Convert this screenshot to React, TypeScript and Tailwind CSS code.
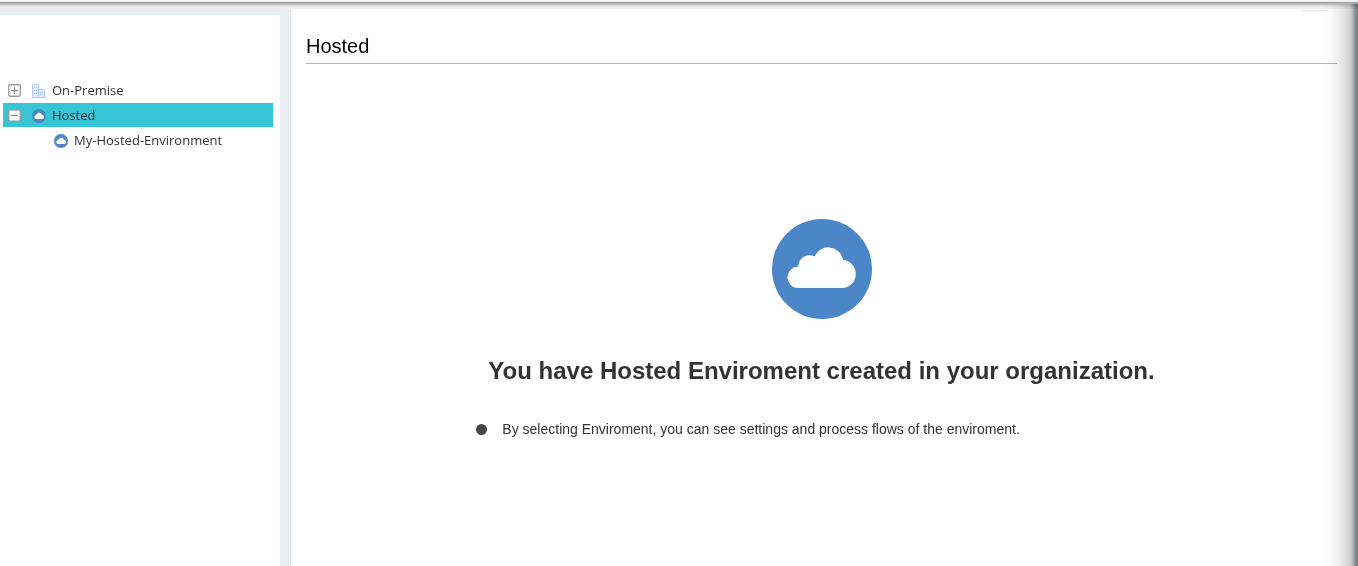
import React from "react";

function CloudIcon({ className }: { className: string }) {
  return (
    <svg viewBox="0 0 100 100" className={className} aria-hidden="true">
      <circle cx="50" cy="50" r="50" fill="#4a86c8" />
      <path
        d="M26 69A10.7 10.7 0 0 1 26.3 47.6A11 11 0 0 1 42.4 37.6A15 15 0 0 1 71 40.7A14.2 14.2 0 0 1 70.4 69Z"
        fill="#fff"
      />
    </svg>
  );
}

function SmallCloudIcon() {
  return (
    <svg viewBox="0 0 14 16" className="h-4 w-3.5 shrink-0" aria-hidden="true">
      <circle cx="7" cy="9" r="7" fill="#4a86c8" />
      <path d="M3.7 12A1.9 1.9 0 0 1 3.4 8.4A1.8 1.8 0 0 1 5.3 6.9A2.4 2.4 0 0 1 9.7 7.8A2.1 2.1 0 0 1 10.2 12Z" fill="#fff" />
    </svg>
  );
}

function BuildingIcon() {
  return (
    <svg viewBox="0 0 14 16" className="h-4 w-3.5 shrink-0" aria-hidden="true">
      <path d="M.5 2.5H6.5V15.5H.5Z" fill="#e3edff" stroke="#b5cdfb" />
      <path d="M6.5 7.5H12.5V15.5H6.5Z" fill="#e3edff" stroke="#b5cdfb" />
      <path d="M2 5.5H5M2 8.5H5M2 11.5H5M8 10.5H11M8 12.5H11" stroke="#9dbdf8" strokeDasharray="1 1" />
      <path d="M0 15.5H14" stroke="#a9c5fa" />
    </svg>
  );
}

function Toggle({ open, label }: { open: boolean; label: string }) {
  return (
    <button type="button" aria-label={label} aria-expanded={open} className="size-[13px] shrink-0">
      <svg viewBox="0 0 13 13" className="block size-[13px]">
        <rect x=".75" y=".75" width="11.5" height="11.5" rx="1.5" fill="#fff" stroke="#999" strokeWidth="1.3" />
        <path d={open ? "M3 6.5H10" : "M3 6.5H10M6.5 3V10"} stroke="#888" />
      </svg>
    </button>
  );
}

export default function App() {
  return (
    <div className="relative flex min-h-screen flex-col bg-[#ebeff3] font-['Liberation_Sans',Arial,sans-serif] text-[#333]">
      <div className="h-[9px] shrink-0 bg-[linear-gradient(to_bottom,#f4f6f6_0px,#f4f6f6_1px,#e0e2e2_2px,#a4a4a4_2px,#a4a4a4_3px,#bdbaba_4px,#d4d1d1_5px,#e3e0e0_6px,#eeebeb_7px,#f1efef_9px)]" />
      <div className="flex flex-1">
        <nav aria-label="Environments" className="mt-1.5 w-[280px] shrink-0 bg-white pt-[63px] pr-[7px] pl-[3px] font-['Open_Sans',sans-serif] text-[13px] leading-6">
          <ul className="flex flex-col gap-px">
            <li className="flex h-6 items-center pl-[5px]">
              <Toggle open={false} label="Expand On-Premise" />
              <a href="#on-premise" className="ml-[11px] flex items-center gap-1.5"><BuildingIcon />On-Premise</a>
            </li>
            <li>
              <div className="flex h-6 items-center bg-[#37c5d5] pl-[5px]">
                <Toggle open label="Collapse Hosted" />
                <a href="#hosted" aria-current="page" className="ml-[11px] flex items-center gap-1.5"><SmallCloudIcon />Hosted</a>
              </div>
              <ul className="mt-px">
                <li className="flex h-6 items-center pl-[51px]">
                  <a href="#my-hosted-environment" className="flex items-center gap-1.5"><SmallCloudIcon />My-Hosted-Environment</a>
                </li>
              </ul>
            </li>
          </ul>
        </nav>
        <main className="ml-2.5 flex-1 border-l border-[#e3e7eb] bg-white pr-[21px] pl-[15px]">
          <h1 className="border-b border-[#b5b5b5] pt-[25px] pb-[5px] text-[20px] leading-6 text-black">Hosted</h1>
          <section className="flex flex-col items-center pt-[155px]">
            <CloudIcon className="size-[100px]" />
            <div className="mt-9">
              <h2 className="px-3 text-2xl leading-8 font-bold">You have Hosted Enviroment created in your organization.</h2>
              <ul className="mt-8">
                <li className="flex items-center gap-[15px] text-sm leading-5">
                  <span className="size-[11px] rounded-full bg-[#484848]" />
                  By selecting Enviroment, you can see settings and process flows of the enviroment.
                </li>
              </ul>
            </div>
          </section>
        </main>
      </div>
      <div className="pointer-events-none absolute top-1 right-0 bottom-0 w-10 bg-[linear-gradient(to_right,#ffffff_0px,#f9f9f9_14px,#ededed_21px,#dddddd_28px,#cccccc_33px,#adb1b4_35px,#8f9397_37px,#727578_40px)] mix-blend-multiply" />
      <div className="pointer-events-none absolute top-2.5 right-[30px] h-px w-[27px] bg-[#e8e8e8]" />
    </div>
  );
}
